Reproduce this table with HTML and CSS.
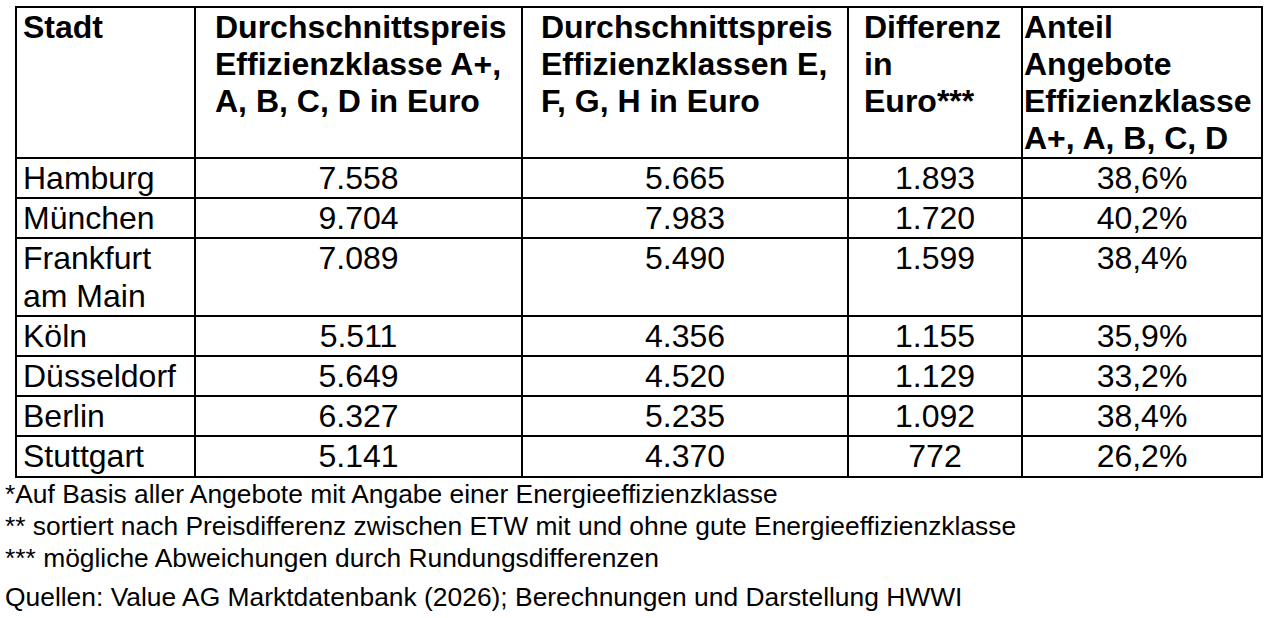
FILE: index.html
```html
<!DOCTYPE html>
<html lang="de">
<head>
<meta charset="utf-8">
<title>Preise nach Energieeffizienzklasse</title>
<link rel="stylesheet" href="styles.css">
</head>
<body>
<div class="page">
  <table class="data">
    <colgroup>
      <col class="c1"><col class="c2"><col class="c3"><col class="c4"><col class="c5">
    </colgroup>
    <thead>
      <tr>
        <th class="h1">Stadt</th>
        <th class="h2">Durchschnittspreis<br>Effizienzklasse A+,<br>A, B, C, D in Euro</th>
        <th class="h3">Durchschnittspreis<br>Effizienzklassen E,<br>F, G, H in Euro</th>
        <th class="h4">Differenz<br>in<br>Euro***</th>
        <th class="h5">Anteil<br>Angebote<br>Effizienzklasse<br>A+, A, B, C, D</th>
      </tr>
    </thead>
    <tbody>
      <tr><td class="city">Hamburg</td><td>7.558</td><td>5.665</td><td>1.893</td><td>38,6%</td></tr>
      <tr><td class="city">München</td><td>9.704</td><td>7.983</td><td>1.720</td><td>40,2%</td></tr>
      <tr><td class="city">Frankfurt<br>am Main</td><td>7.089</td><td>5.490</td><td>1.599</td><td>38,4%</td></tr>
      <tr><td class="city">Köln</td><td>5.511</td><td>4.356</td><td>1.155</td><td>35,9%</td></tr>
      <tr><td class="city">Düsseldorf</td><td>5.649</td><td>4.520</td><td>1.129</td><td>33,2%</td></tr>
      <tr><td class="city">Berlin</td><td>6.327</td><td>5.235</td><td>1.092</td><td>38,4%</td></tr>
      <tr><td class="city">Stuttgart</td><td>5.141</td><td>4.370</td><td>772</td><td>26,2%</td></tr>
    </tbody>
  </table>
  <div class="notes">
    <p class="note">*Auf Basis aller Angebote mit Angabe einer Energieeffizienzklasse</p>
    <p class="note">** sortiert nach Preisdifferenz zwischen ETW mit und ohne gute Energieeffizienzklasse</p>
    <p class="note">*** mögliche Abweichungen durch Rundungsdifferenzen</p>
    <p class="note source">Quellen: Value AG Marktdatenbank (2026); Berechnungen und Darstellung HWWI</p>
  </div>
</div>
</body>
</html>
```

FILE: styles.css
```css
html, body {
  margin: 0;
  padding: 0;
  background: #ffffff;
}

body {
  font-family: "Liberation Sans", Arial, sans-serif;
  color: #000000;
}

.page {
  padding: 6px 0 0 5px;
}

.data {
  border-collapse: collapse;
  table-layout: fixed;
  width: 1246px;
  margin-left: 10px;
  font-size: 32px;
  line-height: 37.2px;
}

.c1 { width: 179px; }
.c2 { width: 327px; }
.c3 { width: 326px; }
.c4 { width: 174px; }
.c5 { width: 240px; }

.data th,
.data td {
  border: 2px solid #000000;
  vertical-align: top;
  padding: 0;
}

.data th {
  text-align: left;
  font-weight: bold;
  line-height: 37px;
  height: 148px;
  padding-top: 1px;
}

.h1 { padding-left: 6px !important; }
.h2 { padding-left: 19px !important; }
.h3 { padding-left: 18px !important; }
.h4 { padding-left: 15px !important; }
.h5 { padding-left: 1px !important; }

.data td {
  text-align: center;
  padding-top: 1px;
}

.data td.city {
  text-align: left;
  padding-left: 6px;
}

.notes {
  padding-top: 0;
}

.note {
  margin: 0;
  font-size: 26.4px;
  line-height: 32px;
}

.note.source {
  margin-top: 7px;
}
```
